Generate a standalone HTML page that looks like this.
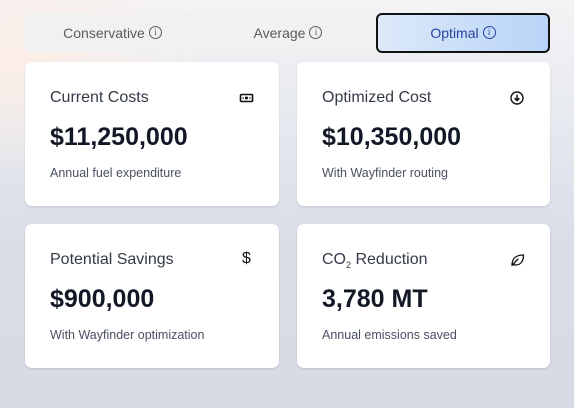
<!DOCTYPE html>
<html><head><style>
*{box-sizing:border-box;margin:0;padding:0}
body{width:574px;height:408px;overflow:hidden;font-family:"Liberation Sans",sans-serif;
background:radial-gradient(ellipse 200px 120px at 20px 60px,#fbeee6 0%,rgba(251,238,230,0) 100%),linear-gradient(180deg,#f4f4f6 0%,#e6e9ef 30%,#d8dde7 60%,#d6dae4 100%);position:relative}
.tabs{position:absolute;left:25px;top:13px;width:525px;height:40px;background:#f1f1f1;border-radius:6px}
.tab{position:absolute;top:0;height:40px;line-height:40px;text-align:center;font-size:14px;color:#5b5b5b}
.tab .i{display:inline-block;width:13px;height:13px;border:1px solid currentColor;border-radius:50%;font-size:9px;line-height:11px;text-align:center;vertical-align:middle;margin-left:4px;margin-top:-3px;font-family:"Liberation Serif",serif}
.opt{left:351px;width:174px;border:2px solid #111;border-radius:6px;background:linear-gradient(90deg,#dde9f9,#b8d4f7);color:#2743a0;line-height:36px}
.card{position:absolute;background:#fff;border-radius:7px;box-shadow:0 1px 2px rgba(0,0,0,.12)}
.t{position:absolute;left:25px;top:27px;font-size:16px;color:#343b47}
.v{position:absolute;left:25px;top:61px;font-size:25px;font-weight:bold;color:#121826}
.s{position:absolute;left:25px;top:104px;font-size:12.5px;color:#4a5060}
.ic{position:absolute}
</style></head><body>
<div class="tabs">
<div class="tab" style="left:0;width:175px">Conservative<span class="i">i</span></div>
<div class="tab" style="left:175px;width:176px">Average<span class="i">i</span></div>
<div class="tab opt">Optimal<span class="i">i</span></div>
</div>
<div class="card" style="left:25px;top:62px;width:254px;height:144px">
<div class="t">Current Costs</div>
<svg class="ic" style="left:214px;top:31px" width="15" height="10" viewBox="0 0 14 10"><rect x="1" y="1.5" width="12" height="7" rx="1" fill="none" stroke="#111" stroke-width="1.6"/><circle cx="7" cy="5" r="1.5" fill="#111"/><rect x="3" y="4.3" width="1.2" height="1.4" fill="#111"/><rect x="9.8" y="4.3" width="1.2" height="1.4" fill="#111"/></svg>
<div class="v">$11,250,000</div>
<div class="s">Annual fuel expenditure</div>
</div>
<div class="card" style="left:297px;top:62px;width:253px;height:144px">
<div class="t">Optimized Cost</div>
<svg class="ic" style="left:213px;top:29px" width="14" height="14" viewBox="0 0 14 14"><circle cx="7" cy="7" r="6" fill="none" stroke="#111" stroke-width="1.4"/><path d="M7 3.8v5.6M4.6 7.2L7 9.6l2.4-2.4" fill="none" stroke="#111" stroke-width="1.5"/></svg>
<div class="v">$10,350,000</div>
<div class="s">With Wayfinder routing</div>
</div>
<div class="card" style="left:25px;top:224px;width:254px;height:144px">
<div class="t">Potential Savings</div>
<div class="ic" style="left:217px;top:26px;font-size:16px;color:#111">$</div>
<div class="v">$900,000</div>
<div class="s">With Wayfinder optimization</div>
</div>
<div class="card" style="left:297px;top:224px;width:253px;height:144px">
<div class="t">CO<sub style="font-size:9px">2</sub> Reduction</div>
<svg class="ic" style="left:213px;top:29px" width="15" height="14" viewBox="0 0 15 14"><path d="M2 12.5C2 6 5 2 13.5 2 13.5 9 10 12 5.5 12 4 12 3 11.3 2.5 10.5M2 12.5L8 6" fill="none" stroke="#111" stroke-width="1.3" stroke-linecap="round"/></svg>
<div class="v">3,780 MT</div>
<div class="s">Annual emissions saved</div>
</div>
</body></html>
